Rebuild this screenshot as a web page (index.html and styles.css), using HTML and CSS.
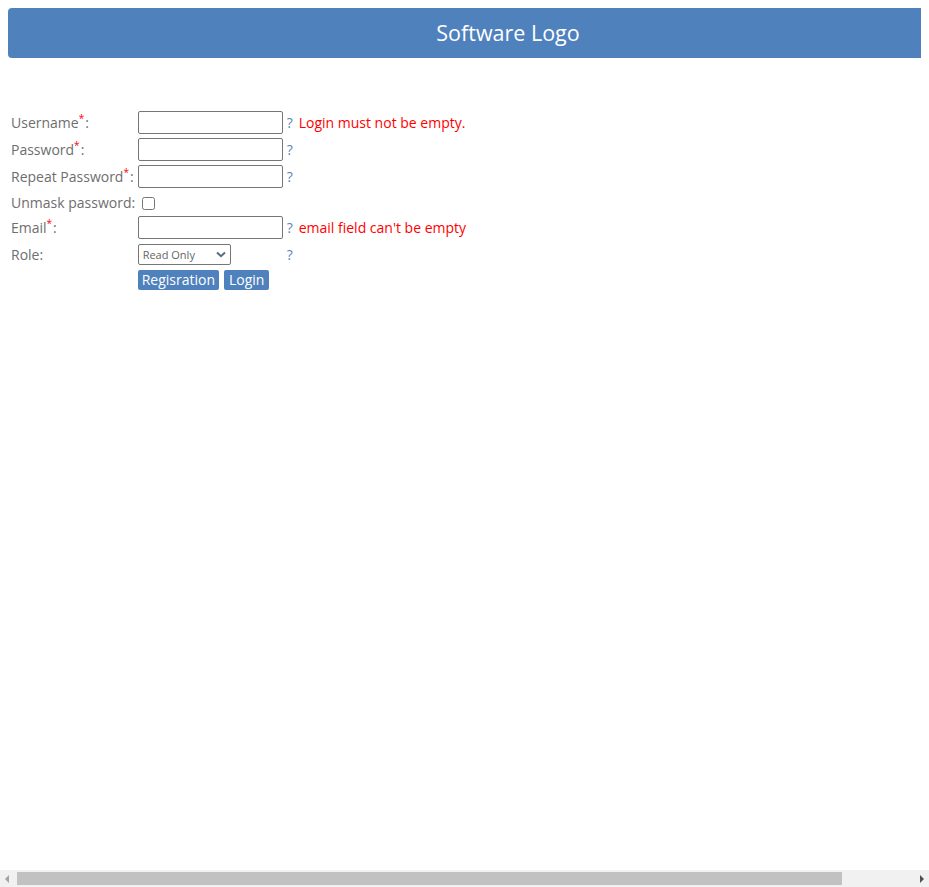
FILE: index.html
```html
<!DOCTYPE html>
<html>
<head>
<meta charset="utf-8">
<link rel="stylesheet" href="styles.css">
</head>
<body>
<div class="header">Software Logo</div>
<form class="reg">
<table class="form-table">
<tr>
  <td class="lbl">Username<sup class="req">*</sup>:</td>
  <td><input type="text" class="field"></td>
  <td class="help">?</td>
  <td class="err">Login must not be empty.</td>
</tr>
<tr>
  <td class="lbl">Password<sup class="req">*</sup>:</td>
  <td><input type="password" class="field"></td>
  <td class="help">?</td>
  <td class="err"></td>
</tr>
<tr>
  <td class="lbl">Repeat Password<sup class="req">*</sup>:</td>
  <td><input type="password" class="field"></td>
  <td class="help">?</td>
  <td class="err"></td>
</tr>
<tr class="row-unmask">
  <td class="lbl" colspan="2">Unmask password: <input type="checkbox" class="chk"></td>
  <td></td>
  <td></td>
</tr>
<tr>
  <td class="lbl">Email<sup class="req">*</sup>:</td>
  <td><input type="text" class="field"></td>
  <td class="help">?</td>
  <td class="err">email field can't be empty</td>
</tr>
<tr>
  <td class="lbl">Role:</td>
  <td><div class="select-wrap"><select class="role"><option>Read Only</option><option>Editor</option><option>Admin</option></select><svg class="chev" width="10" height="7" viewBox="0 0 10 7"><path d="M1 1.5 L5 5.2 L9 1.5" fill="none" stroke="#5d6b7e" stroke-width="2"/></svg></div></td>
  <td class="help">?</td>
  <td class="err"></td>
</tr>
<tr>
  <td></td>
  <td colspan="3" class="btns"><button type="button" class="btn">Regisration</button><button type="button" class="btn">Login</button></td>
</tr>
</table>
</form>
<div class="hscroll" aria-hidden="true">
  <span class="hs-arrow hs-left"></span>
  <span class="hs-thumb"></span>
  <span class="hs-arrow hs-right"></span>
</div>
</body>
</html>
```
FILE: styles.css
```css
html {
  background: #ffffff;
  overflow: hidden;
}
body {
  margin: 8px;
  font-family: "Open Sans", "Noto Sans", sans-serif;
  font-size: 14px;
  color: #6e6e6e;
}
.header {
  box-sizing: border-box;
  margin-right: -8px;
  height: 50px;
  padding-left: 79px;
  background: #4f81bd;
  border-radius: 4px 0 0 4px;
  color: #ffffff;
  font-size: 21.5px;
  line-height: 50px;
  text-align: center;
}
.reg {
  margin-top: 50px;
}
.form-table {
  border-spacing: 2px;
}
.form-table td {
  padding: 1px;
  vertical-align: middle;
  white-space: nowrap;
}
.lbl {
  color: #6e6e6e;
}
.row-unmask td {
  padding-top: 2px;
}
.req {
  color: #ff0000;
  font-size: 10px;
  vertical-align: 6px;
  line-height: 0;
  margin-right: 1px;
}
.field {
  width: 145px;
  height: 23px;
  box-sizing: border-box;
  border: 1px solid #767676;
  border-radius: 2px;
  margin: 0;
  padding: 1px 2px;
  font: inherit;
}
.help {
  color: #5b83b5;
  font-size: 14px;
}
.err {
  color: #ff0000;
  padding-left: 3px !important;
}
.chk {
  width: 13px;
  height: 13px;
  margin: 0 0 0 3px;
  vertical-align: -2px;
}
.select-wrap {
  position: relative;
  width: 93px;
  height: 21px;
  margin-top: 1px;
}
.role {
  -webkit-appearance: none;
  appearance: none;
  box-sizing: border-box;
  width: 93px;
  height: 21px;
  padding: 0 0 0 4px;
  font-family: "Open Sans", "Noto Sans", sans-serif;
  font-size: 11px;
  color: #666;
  border: 1px solid #767676;
  border-radius: 2px;
  background: #fff;
  margin: 0;
}
.chev {
  position: absolute;
  right: 5px;
  top: 7px;
  pointer-events: none;
}
.btns {
  padding-top: 2px !important;
}
.btn {
  background: #4f81bd;
  color: #ffffff;
  border: none;
  border-radius: 2px;
  font-family: "Open Sans", "Noto Sans", sans-serif;
  font-size: 14px;
  height: 20px;
  padding: 0 4px;
  margin: 0 5px 0 0;
  line-height: 20px;
}
.btn + .btn {
  padding: 0 5px;
}
.hscroll {
  position: fixed;
  left: 0;
  right: 0;
  bottom: 0;
  height: 17px;
  background: #f1f1f1;
}
.hs-thumb {
  position: absolute;
  left: 17px;
  width: 825px;
  top: 2px;
  height: 13px;
  background: #c1c1c1;
}
.hs-arrow {
  position: absolute;
  top: 5px;
  width: 0;
  height: 0;
  border-top: 4px solid transparent;
  border-bottom: 4px solid transparent;
}
.hs-left {
  left: 5px;
  border-right: 4px solid #a3a3a3;
}
.hs-right {
  right: 5px;
  border-left: 4px solid #505050;
}
```
